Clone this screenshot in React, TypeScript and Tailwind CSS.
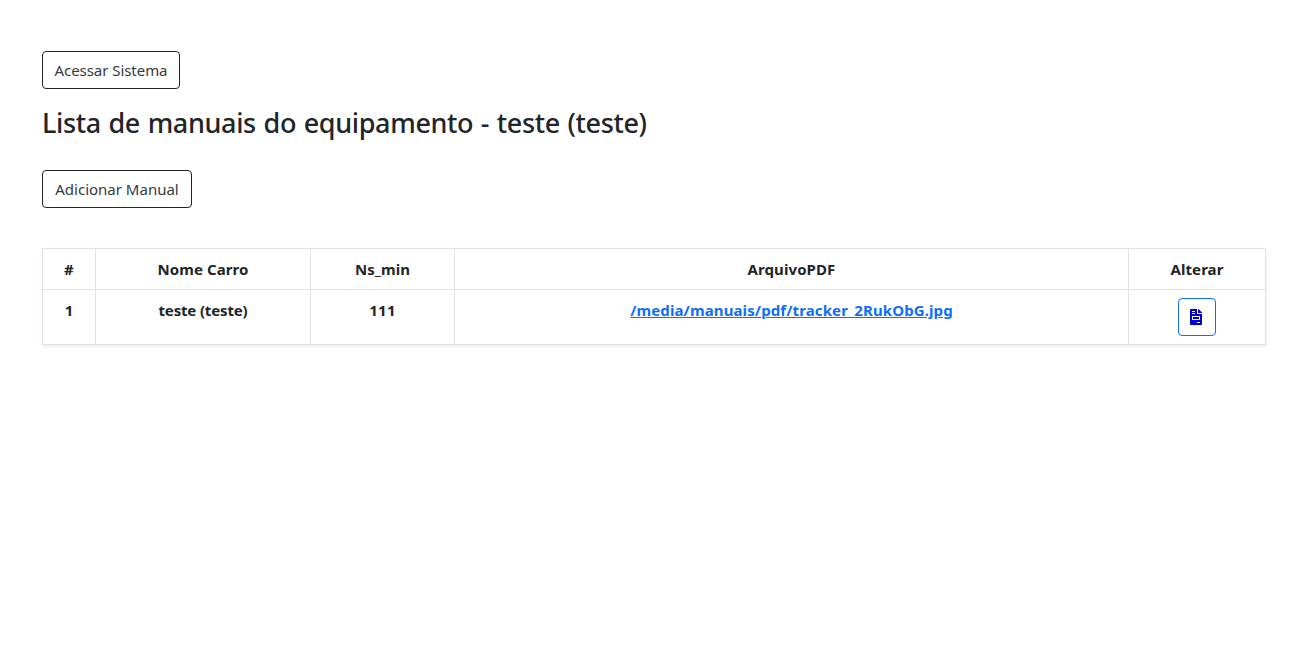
import React from "react";
import { FaFileInvoice } from "react-icons/fa";

const button =
  "flex h-[38px] items-center justify-center self-start whitespace-nowrap rounded-[4px] border border-[#212529] text-[15px] leading-6 font-normal text-[#343a40]";
const cell = "border border-[#dee2e6] p-2 text-center align-top font-bold leading-6";

export default function App() {
  return (
    <main className="flex min-h-[646px] flex-col bg-white pt-[51px] pr-[38px] pl-[42px] font-['Noto_Sans',sans-serif] text-[15px] text-[#212529]">
      <button className={`${button} w-[138px] tracking-[-0.05px]`}>Acessar Sistema</button>
      <h1 className="mt-[17px] text-[27px] leading-[34px] font-medium tracking-[-0.36px] [word-spacing:1px]">
        Lista de manuais do equipamento - teste (teste)
      </h1>
      <button className={`${button} mt-[30px] w-[150px]`}>Adicionar Manual</button>
      <table className="mt-[40px] w-[1224px] table-fixed border-collapse shadow-[0_2px_4px_rgba(0,0,0,0.075)]">
        <colgroup>
          <col className="w-[53px]" />
          <col className="w-[215px]" />
          <col className="w-[144px]" />
          <col className="w-[674px]" />
          <col className="w-[137px]" />
        </colgroup>
        <thead>
          <tr>
            {["#", "Nome Carro", "Ns_min", "ArquivoPDF", "Alterar"].map((title) => (
              <th key={title} className={`${cell} tracking-[0.08px]`}>{title}</th>
            ))}
          </tr>
        </thead>
        <tbody>
          <tr>
            <td className={cell}>1</td>
            <td className={`${cell} tracking-[-0.15px]`}>teste (teste)</td>
            <td className={`${cell} tracking-[0.2px]`}>111</td>
            <td className={cell}>
              <a href="#" className="tracking-[0.11px] text-[#0d6efd] underline">
                /media/manuais/pdf/tracker_2RukObG.jpg
              </a>
            </td>
            <td className={cell}>
              <button
                aria-label="Alterar"
                className="mx-auto flex size-[38px] items-center justify-center rounded-[4px] border border-[#0d6efd] pr-0.5 text-[#0000cd]"
              >
                <FaFileInvoice className="h-4 w-3" />
              </button>
            </td>
          </tr>
        </tbody>
      </table>
    </main>
  );
}
